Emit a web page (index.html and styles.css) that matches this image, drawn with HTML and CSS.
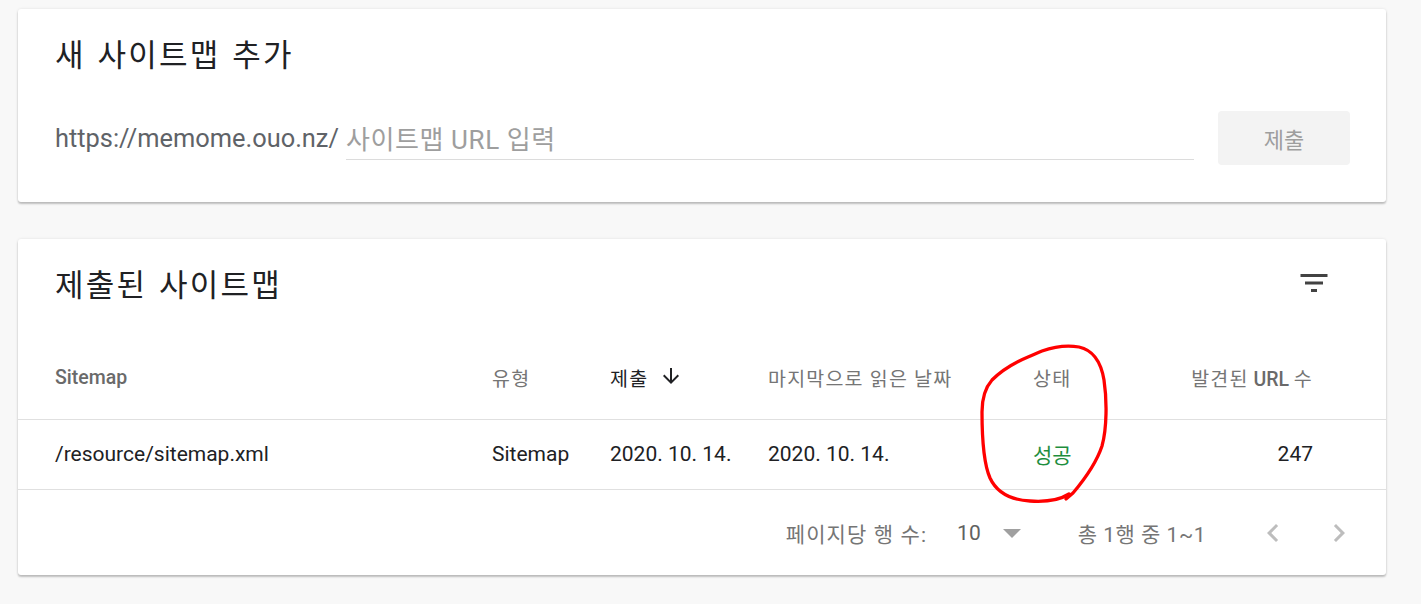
FILE: index.html
```html
<!DOCTYPE html>
<html lang="ko">
<head>
<meta charset="utf-8">
<title>Sitemaps</title>
<link rel="stylesheet" href="styles.css">
</head>
<body>
<main class="page">
  <section class="card card-add">
    <h2 class="card-title">새 사이트맵 추가</h2>
    <div class="add-row">
      <span class="prefix">https://memome.ouo.nz/</span>
      <input class="url-input" type="text" placeholder="사이트맵 URL 입력">
      <button class="submit" type="button">제출</button>
    </div>
  </section>

  <section class="card card-list">
    <div class="list-head">
      <h2 class="card-title">제출된 사이트맵</h2>
      <button class="icon-btn filter" type="button" aria-label="필터">
        <svg viewBox="0 0 24 24" width="36" height="36"><path d="M10 18h4v-2h-4v2zM3 6v2h18V6H3zm3 7h12v-2H6v2z"/></svg>
      </button>
    </div>

    <div class="table">
      <div class="tr th">
        <div class="cell med">Sitemap</div>
        <div class="cell ko">유형</div>
        <div class="cell sorted"><span class="ko">제출</span>
          <svg class="sort-arrow" viewBox="0 0 24 24" width="24" height="24"><path d="M20 12l-1.41-1.41L13 16.17V4h-2v12.17l-5.58-5.59L4 12l8 8 8-8z"/></svg>
        </div>
        <div class="cell ko">마지막으로 읽은 날짜</div>
        <div class="cell ko">상태</div>
        <div class="cell num"><span class="ko">발견된</span> <span class="med">URL</span> <span class="ko">수</span></div>
      </div>
      <div class="tr td">
        <div class="cell">/resource/sitemap.xml</div>
        <div class="cell">Sitemap</div>
        <div class="cell">2020. 10. 14.</div>
        <div class="cell">2020. 10. 14.</div>
        <div class="cell ok">성공</div>
        <div class="cell num">247</div>
      </div>
    </div>

    <div class="pager">
      <span class="pager-label">페이지당 행 수:</span>
      <div class="rows-select">
        <span class="rows-value">10</span>
        <svg class="drop" viewBox="0 0 18 9" width="18" height="9"><polygon points="0,0 18,0 9,9"/></svg>
      </div>
      <span class="range">총 1행 중 1~1</span>
      <button class="icon-btn nav" type="button" aria-label="이전">
        <svg viewBox="0 0 24 24" width="36" height="36"><path d="M15.41 7.41L14 6l-6 6 6 6 1.41-1.41L10.83 12z"/></svg>
      </button>
      <button class="icon-btn nav" type="button" aria-label="다음">
        <svg viewBox="0 0 24 24" width="36" height="36"><path d="M8.59 16.59L10 18l6-6-6-6-1.41 1.41L13.17 12z"/></svg>
      </button>
    </div>
  </section>
</main>

<svg class="annotation" viewBox="0 0 1421 604" width="1421" height="604" aria-hidden="true">
  <path d="M1042,351 C1056,346 1068,345 1079,347 C1093,350 1101,362 1104,380 C1107,400 1107,428 1102,446 C1096,464 1084,480 1073,493 L1066,499 L1069,494 C1058,501 1044,502 1030,501 C1012,500 997,493 990,478 C983,462 982,436 982,412 C982,398 985,388 992,380 C1003,369 1016,362 1028,357 C1033,355 1037,353 1042,351 Z"/>
</svg>
</body>
</html>
```

FILE: styles.css
```css
html, body {
  margin: 0;
  padding: 0;
}

body {
  background: #f8f8f8;
  font-family: Roboto, "Noto Sans CJK KR", sans-serif;
  color: #202124;
  position: relative;
  width: 1421px;
  height: 604px;
  overflow: hidden;
}

.page {
  display: flex;
  flex-direction: column;
  gap: 37px;
  padding: 9px 0 0 18px;
  width: 1368px;
}

.card {
  background: #fff;
  border-radius: 3px;
  box-shadow: 0 2px 2px rgba(0, 0, 0, 0.22), 0 0 3px rgba(0, 0, 0, 0.10);
}

.card-title {
  margin: 0;
  padding: 22px 0 0 37px;
  height: 46px;
  font-family: "Noto Sans CJK KR", sans-serif;
  font-weight: 400;
  font-size: 31px;
  line-height: 44px;
  letter-spacing: 2.2px;
  word-spacing: 1px;
  color: #202124;
}

/* add card */
.card-add {
  height: 193px;
  box-sizing: border-box;
  padding-bottom: 37px;
}

.add-row {
  display: flex;
  align-items: center;
  margin-top: 34px;
  padding: 0 36px 0 37px;
  height: 54px;
}

.prefix {
  font-size: 25.4px;
  line-height: 44px;
  color: #5f6368;
  white-space: nowrap;
}

.url-input {
  flex: 1;
  margin-left: 7px;
  height: 44px;
  box-sizing: border-box;
  border: none;
  border-bottom: 1px solid #dcdcdc;
  padding: 5px 0 0;
  font-family: Roboto, "Noto Sans CJK KR", sans-serif;
  font-size: 26px;
  letter-spacing: 0.6px;
  color: #202124;
  background: transparent;
  outline: none;
}

.url-input::placeholder {
  color: #9e9e9e;
}

.submit {
  margin-left: 24px;
  width: 132px;
  height: 54px;
  border: none;
  border-radius: 4px;
  background: #f3f3f3;
  color: #9e9e9e;
  font-family: "Noto Sans CJK KR", sans-serif;
  font-size: 22px;
  padding: 0;
}

/* list card */
.card-list {
  height: 336px;
  box-sizing: border-box;
  display: flex;
  flex-direction: column;
}

.list-head {
  display: flex;
  justify-content: space-between;
  align-items: flex-start;
  height: 96px;
}

.icon-btn {
  border: none;
  background: none;
  padding: 0;
  width: 36px;
  height: 36px;
  display: flex;
  align-items: center;
  justify-content: center;
}

.filter {
  margin: 26px 54px 0 0;
  fill: #424242;
}

.tr {
  display: grid;
  grid-template-columns: 437px 118px 158px 265px 1fr 1fr;
  align-items: center;
  padding: 0 73px 0 37px;
  border-bottom: 1px solid #e0e0e0;
}

.th {
  height: 84px;
  font-size: 19.5px;
  color: #757575;
}

.th .ko {
  letter-spacing: 1.2px;
}

.th .med {
  font-weight: 500;
  color: #6a6a6a;
}

.th .sorted {
  color: #202124;
  display: flex;
  align-items: center;
  gap: 11px;
}

.sort-arrow {
  fill: #202124;
  margin-top: -2px;
}

.td {
  height: 70px;
  padding-bottom: 2px;
  box-sizing: border-box;
  font-size: 21px;
  color: #202124;
}

.cell {
  white-space: nowrap;
}

.num {
  text-align: right;
}

.ok {
  color: #1e8e3e;
}

/* pager */
.pager {
  flex: 1;
  display: flex;
  justify-content: flex-end;
  align-items: center;
  padding-right: 29px;
  font-size: 21px;
  color: #757575;
}

.pager-label {
  letter-spacing: 1.1px;
}

.rows-select {
  display: flex;
  align-items: center;
  gap: 22px;
  margin-left: 30px;
}

.rows-value {
  color: #616161;
}

.drop {
  fill: #a0a0a0;
  margin-top: 2px;
}

.range {
  margin-left: 57px;
  margin-right: 49px;
  letter-spacing: 0.5px;
}

.nav {
  fill: #bdbdbd;
}

.nav + .nav {
  margin-left: 30px;
}

/* hand-drawn annotation overlay */
.annotation {
  position: absolute;
  left: 0;
  top: 0;
  pointer-events: none;
  fill: none;
  stroke: #ff0000;
  stroke-width: 3.3;
  stroke-linecap: round;
  stroke-linejoin: round;
}
```
